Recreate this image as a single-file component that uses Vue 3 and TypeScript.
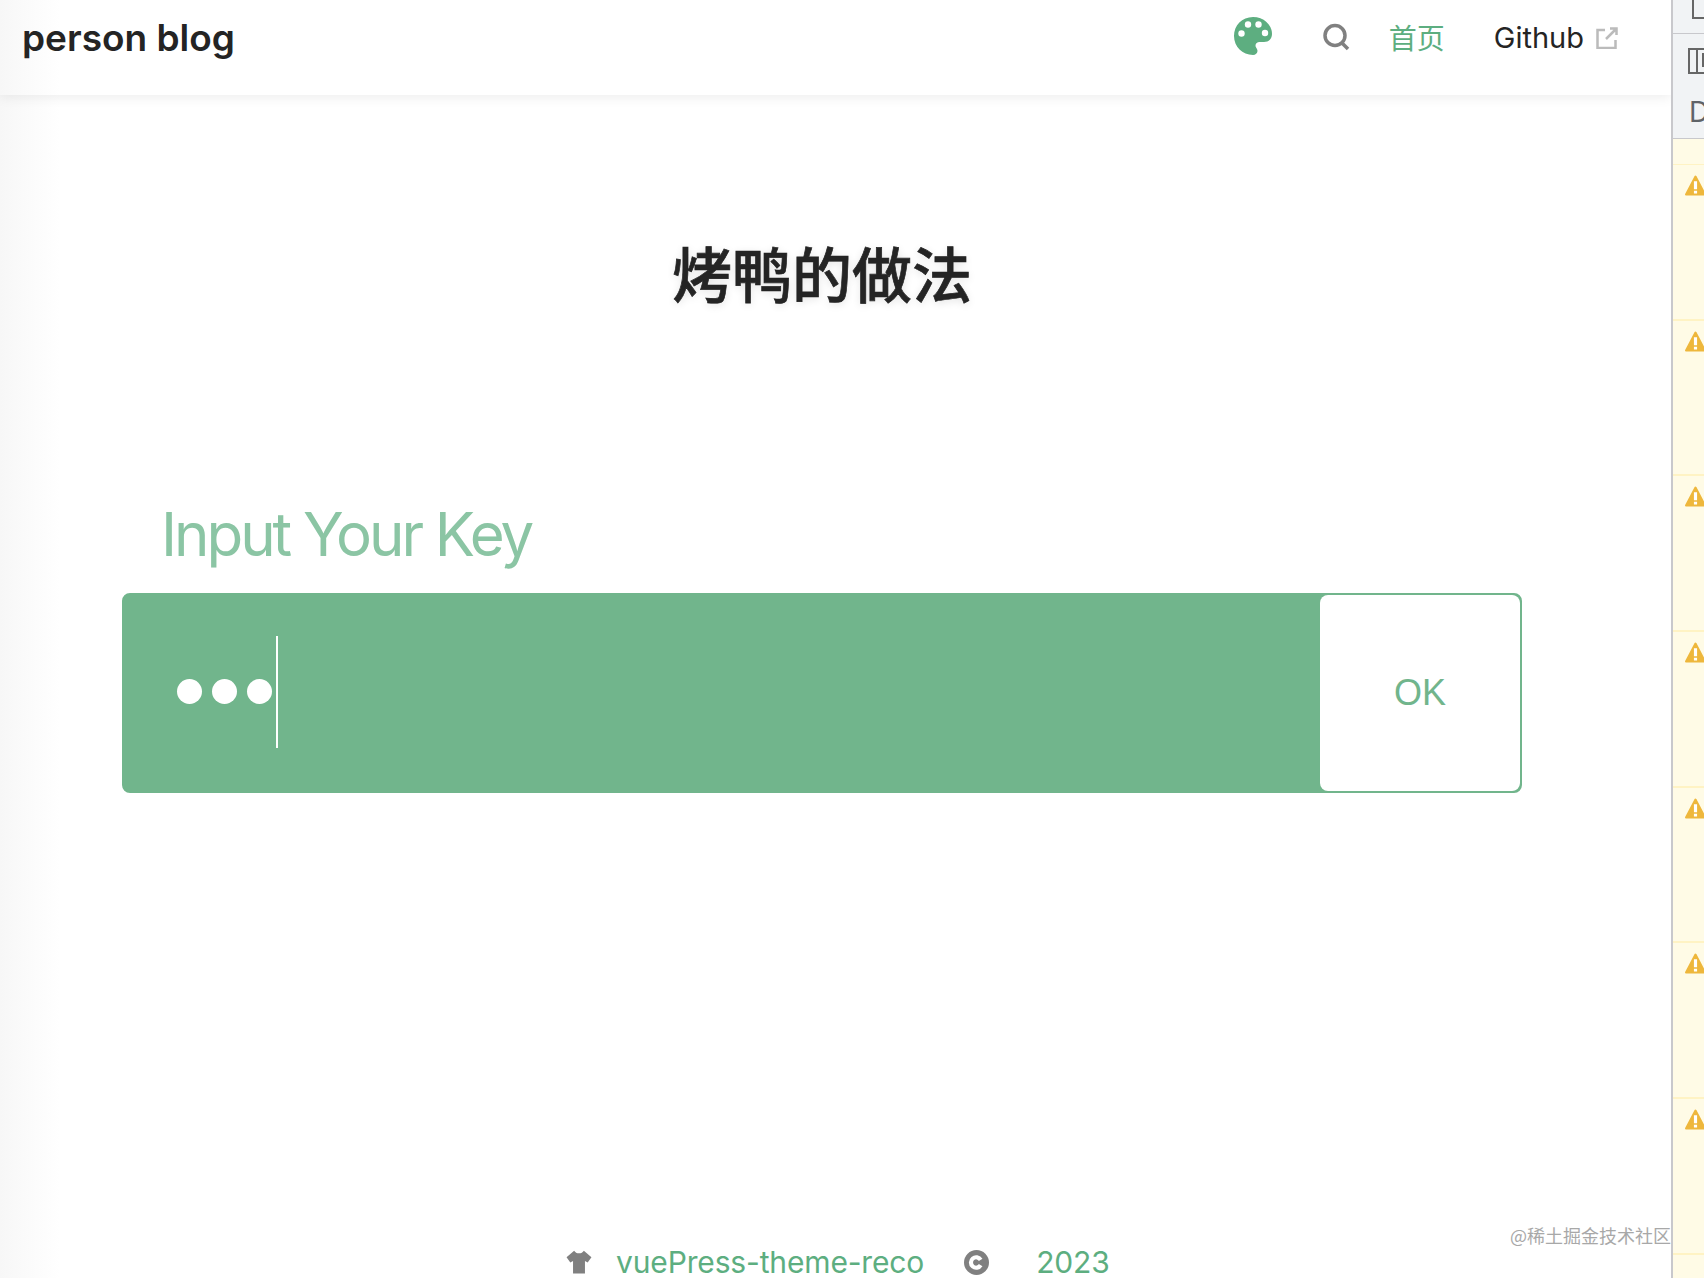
<script setup lang="ts">
const warningCount = 7;
const dots = 3;
</script>

<template>
  <div class="page">
    <div class="main">
      <header class="navbar">
        <span class="site-name">person blog</span>
        <div class="nav-right">
          <svg class="palette" viewBox="0 0 40 40" aria-hidden="true">
            <path
              d="M20 1C9 1 1 9.500 1 20c0 10.500 8.500 19 19 19 2.500 0 4.500-1.800 4.500-4 0-1.200-.5-2-1-2.800-.5-.8-1-1.600-1-2.700 0-2.300 1.800-3.500 4-3.500h4.500C36 26 39 22.500 39 18 39 8.500 30.500 1 20 1z"
              fill="#5dae80"
            />
            <circle cx="8.500" cy="17.500" r="3.200" fill="#fff" />
            <circle cx="15" cy="8.500" r="3.200" fill="#fff" />
            <circle cx="25.500" cy="8.500" r="3.200" fill="#fff" />
            <circle cx="32" cy="17" r="3.200" fill="#fff" />
          </svg>
          <svg class="search" viewBox="0 0 28 28" aria-hidden="true">
            <circle cx="13" cy="12.500" r="10" />
            <path d="M20 20l6 6" />
          </svg>
          <a class="nav-link nav-link--active">首页</a>
          <a class="nav-link nav-link--github">
            Github
            <svg class="external" viewBox="0 0 22 22" aria-hidden="true">
              <path d="M9 3H1.500v18h18v-8" />
              <path d="M10 12L20.500 1.500M14 1.500h6.500V8" />
            </svg>
          </a>
        </div>
      </header>

      <div class="content">
        <h1 class="title">烤鸭的做法</h1>
        <p class="key-label">Input Your Key</p>
        <div class="key-form">
          <div class="key-input">
            <i v-for="n in dots" :key="n" class="dot" />
            <i class="caret" />
          </div>
          <button class="ok">OK</button>
        </div>
      </div>

      <footer class="footer">
        <svg class="shirt" viewBox="0 0 24 24" aria-hidden="true">
          <path d="M7.500 1.500L.5 7.500l3.500 5 2.500-1.500v11.500h11V11l2.500 1.500 3.500-5-7-6c-1 1.500-2.500 2.500-4.500 2.500S8.500 3 7.500 1.500z" />
        </svg>
        <a class="footer-link">vuePress-theme-reco</a>
        <svg class="copyright" viewBox="0 0 24 24" aria-hidden="true">
          <circle cx="12" cy="12" r="12" />
          <path d="M16 9.500a5 5 0 1 0 0 5" />
        </svg>
        <a class="footer-link footer-year">2023</a>
      </footer>
    </div>

    <aside class="panel">
      <div class="panel-top"><span class="mini-doc" /></div>
      <div class="panel-tools">
        <span class="mini-columns"><i /><b /></span>
        <span class="panel-letter">D</span>
      </div>
      <div class="panel-gap" />
      <div v-for="n in warningCount" :key="n" class="warning">
        <svg class="warning-icon" viewBox="0 0 20 20" aria-hidden="true">
          <path d="M10 1.500L19 18.500H1z" fill="#eeb73c" stroke="#eeb73c" stroke-width="2" stroke-linejoin="round" />
          <path d="M10 6v7.500M10 15v2.500" stroke="#fff" stroke-width="3" />
        </svg>
      </div>
    </aside>

    <span class="watermark">@稀土掘金技术社区</span>
  </div>
</template>

<style>
html,
body {
  margin: 0;
  background: #fff;
}
</style>

<style scoped>
.page {
  position: relative;
  display: flex;
  width: 1704px;
  height: 1278px;
  overflow: hidden;
  font-family: Inter, "Liberation Sans", "Noto Sans CJK SC", sans-serif;
  color: #242424;
}

.main {
  display: flex;
  flex: 0 0 1671px;
  flex-direction: column;
  background: linear-gradient(90deg, #f7f7f7 0, #fff 60px);
}

.navbar {
  display: flex;
  flex: 0 0 95px;
  align-items: center;
  justify-content: space-between;
  box-sizing: border-box;
  padding: 0 53px 20px 22px;
  box-shadow: 0 2px 12px rgb(0 0 0 / 8%);
}

.site-name {
  font-size: 37px;
  font-weight: 600;
  line-height: 48px;
}

.nav-right {
  display: flex;
  align-items: center;
}

.palette {
  width: 40px;
  height: 40px;
  margin-bottom: 4px;
}

.search {
  width: 28px;
  height: 28px;
  margin-bottom: 2px;
  margin-left: 49px;
  fill: none;
  stroke: #808080;
  stroke-width: 3.500;
}

.nav-link {
  font-size: 29px;
  line-height: 40px;
}

.nav-link--active {
  margin-bottom: 2px;
  margin-left: 39px;
  font-family: "Noto Sans CJK SC", sans-serif;
  font-size: 28px;
  color: #5dae80;
}

.nav-link--github {
  display: flex;
  align-items: center;
  margin-left: 49px;
}

.external {
  width: 22px;
  height: 22px;
  margin-left: 12px;
  fill: none;
  stroke: #bbb;
  stroke-width: 2.500;
}

.content {
  display: flex;
  flex: 1;
  flex-direction: column;
  align-items: flex-start;
  width: 1400px;
  margin-left: 122px;
}

.title {
  align-self: center;
  margin: 140px 0 0;
  font-family: "Noto Sans CJK SC", sans-serif;
  font-size: 60px;
  font-weight: 500;
  line-height: 74px;
  color: #242424;
  text-shadow: 0 2px 8px rgb(0 0 0 / 12%);
  -webkit-text-stroke: 0.7px #242424;
}

.key-label {
  margin: 187px 0 0 39px;
  font-size: 60px;
  font-weight: 400;
  line-height: 76px;
  letter-spacing: -3.050px;
  color: #8bc5a4;
}

.key-form {
  display: flex;
  width: 1400px;
  height: 200px;
  margin-top: 21px;
  box-sizing: border-box;
  overflow: hidden;
  background: #71b58c;
  border: 2px solid #71b58c;
  border-radius: 8px;
}

.key-input {
  display: flex;
  flex: 1;
  align-items: center;
  padding: 0 0 3px 53px;
}

.dot {
  width: 25px;
  height: 25px;
  margin-right: 10px;
  background: #fff;
  border-radius: 50%;
}

.caret {
  width: 2px;
  height: 112px;
  margin-left: -6px;
  background: #fff;
}

.ok {
  width: 200px;
  padding: 0;
  font-family: "Liberation Sans", sans-serif;
  font-size: 36px;
  color: #71b58c;
  background: #fff;
  border: 0;
  border-radius: 8px;
}

.footer {
  display: flex;
  flex: 0 0 50px;
  align-items: center;
  box-sizing: border-box;
  padding: 18px 0 0 566px;
  font-size: 30px;
  line-height: 28px;
}

.shirt {
  width: 26px;
  height: 26px;
  fill: #808080;
}

.footer-link {
  margin-left: 24px;
  color: #5dae80;
  letter-spacing: -0.150px;
}

.copyright {
  width: 25px;
  height: 25px;
  margin-left: 40px;
}

.copyright circle {
  fill: #808080;
}

.copyright path {
  fill: none;
  stroke: #fff;
  stroke-width: 4;
}

.footer-year {
  margin-left: 47px;
}

.panel {
  flex: 1;
  overflow: hidden;
  background: #fffbe6;
  border-left: 2px solid #c8c8cc;
}

.panel-top {
  height: 33px;
  overflow: hidden;
  background: #f1f3f5;
  border-bottom: 1px solid #c8c8cc;
}

.mini-doc {
  display: block;
  width: 14px;
  height: 17px;
  margin-left: 19px;
  border-bottom: 2px solid #666;
  border-left: 2px solid #666;
}

.panel-tools {
  height: 104px;
  overflow: hidden;
  background: #f1f3f5;
  border-bottom: 1px solid #c8c8cc;
}

.mini-columns {
  display: flex;
  box-sizing: border-box;
  width: 40px;
  height: 26px;
  margin: 14px 0 0 15px;
  border: 2px solid #666;
}

.mini-columns i {
  display: block;
  width: 6px;
  border-right: 2px solid #666;
}

.mini-columns b {
  display: block;
  width: 2px;
  height: 14px;
  margin: 3px 0 0 4px;
  background: #666;
}

.panel-letter {
  display: block;
  margin: 21px 0 0 16px;
  font-size: 28px;
  line-height: 34px;
  color: #5f6368;
}

.panel-gap {
  height: 25px;
  border-bottom: 1px solid #fff3c4;
}

.warning {
  box-sizing: border-box;
  height: 155.700px;
  padding: 10px 0 0 12px;
  border-bottom: 2px solid #fff3c4;
}

.warning-icon {
  display: block;
  width: 21px;
  height: 21px;
}

.watermark {
  position: absolute;
  right: 33px;
  bottom: 30px;
  font-family: "Noto Sans CJK SC", sans-serif;
  font-size: 18px;
  color: #a8a8a8;
}
</style>
